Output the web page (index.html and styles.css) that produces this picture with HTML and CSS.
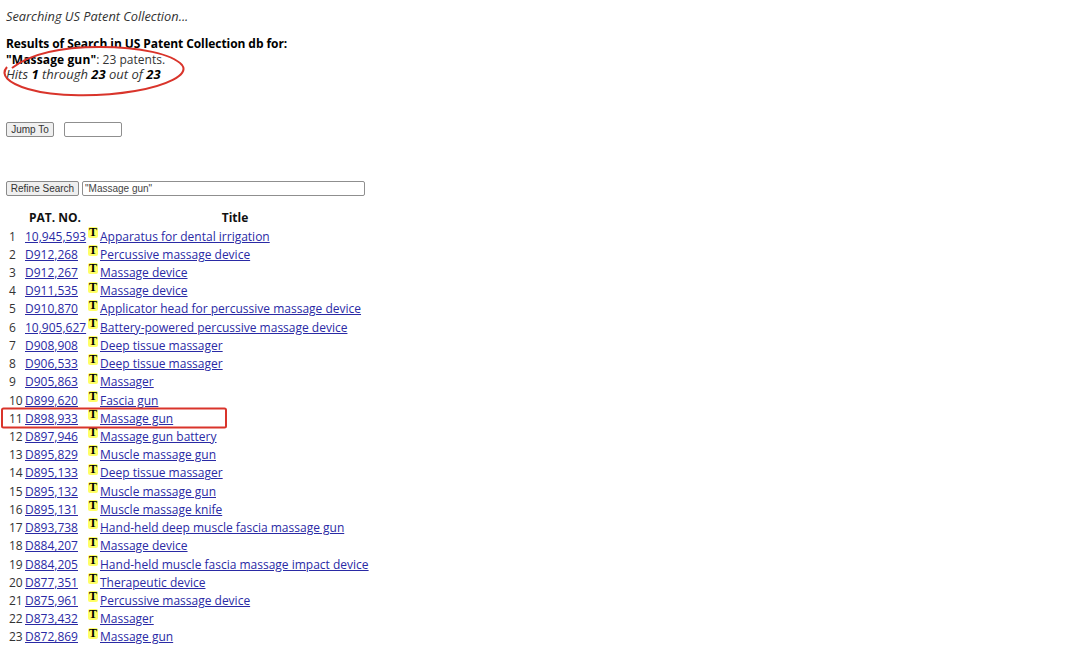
FILE: index.html
```html
<!DOCTYPE html>
<html lang="en">
<head>
<meta charset="utf-8">
<title>Searching US Patent Collection</title>
<link rel="stylesheet" href="styles.css">
</head>
<body>
<p class="searching">Searching US Patent Collection...</p>
<div class="summary">
  <div class="summary-title">Results of Search in US Patent Collection db for:</div>
  <div class="count"><b>"Massage gun"</b>: 23 patents.</div>
  <div class="hits">Hits <b>1</b> through <b>23</b> out of <b>23</b></div>
</div>
<form class="jump"><button type="button" class="btn">Jump To</button><input class="jump-input" type="text"></form>
<form class="refine"><button type="button" class="btn">Refine Search</button><input class="refine-input" type="text" value="&quot;Massage gun&quot;"></form>
<table class="results">
  <colgroup><col class="c-num"><col class="c-no"><col class="c-t"><col class="c-title"></colgroup>
  <thead><tr><th></th><th>PAT. NO.</th><th></th><th>Title</th></tr></thead>
  <tbody>
    <tr><td>1</td><td><a href="#">10,945,593</a></td><td><span class="t">T</span></td><td><a href="#">Apparatus for dental irrigation</a></td></tr>
    <tr><td>2</td><td><a href="#">D912,268</a></td><td><span class="t">T</span></td><td><a href="#">Percussive massage device</a></td></tr>
    <tr><td>3</td><td><a href="#">D912,267</a></td><td><span class="t">T</span></td><td><a href="#">Massage device</a></td></tr>
    <tr><td>4</td><td><a href="#">D911,535</a></td><td><span class="t">T</span></td><td><a href="#">Massage device</a></td></tr>
    <tr><td>5</td><td><a href="#">D910,870</a></td><td><span class="t">T</span></td><td><a href="#">Applicator head for percussive massage device</a></td></tr>
    <tr><td>6</td><td><a href="#">10,905,627</a></td><td><span class="t">T</span></td><td><a href="#">Battery-powered percussive massage device</a></td></tr>
    <tr><td>7</td><td><a href="#">D908,908</a></td><td><span class="t">T</span></td><td><a href="#">Deep tissue massager</a></td></tr>
    <tr><td>8</td><td><a href="#">D906,533</a></td><td><span class="t">T</span></td><td><a href="#">Deep tissue massager</a></td></tr>
    <tr><td>9</td><td><a href="#">D905,863</a></td><td><span class="t">T</span></td><td><a href="#">Massager</a></td></tr>
    <tr><td>10</td><td><a href="#">D899,620</a></td><td><span class="t">T</span></td><td><a href="#">Fascia gun</a></td></tr>
    <tr><td>11</td><td><a href="#">D898,933</a></td><td><span class="t">T</span></td><td><a href="#">Massage gun</a></td></tr>
    <tr><td>12</td><td><a href="#">D897,946</a></td><td><span class="t">T</span></td><td><a href="#">Massage gun battery</a></td></tr>
    <tr><td>13</td><td><a href="#">D895,829</a></td><td><span class="t">T</span></td><td><a href="#">Muscle massage gun</a></td></tr>
    <tr><td>14</td><td><a href="#">D895,133</a></td><td><span class="t">T</span></td><td><a href="#">Deep tissue massager</a></td></tr>
    <tr><td>15</td><td><a href="#">D895,132</a></td><td><span class="t">T</span></td><td><a href="#">Muscle massage gun</a></td></tr>
    <tr><td>16</td><td><a href="#">D895,131</a></td><td><span class="t">T</span></td><td><a href="#">Muscle massage knife</a></td></tr>
    <tr><td>17</td><td><a href="#">D893,738</a></td><td><span class="t">T</span></td><td><a href="#">Hand-held deep muscle fascia massage gun</a></td></tr>
    <tr><td>18</td><td><a href="#">D884,207</a></td><td><span class="t">T</span></td><td><a href="#">Massage device</a></td></tr>
    <tr><td>19</td><td><a href="#">D884,205</a></td><td><span class="t">T</span></td><td><a href="#">Hand-held muscle fascia massage impact device</a></td></tr>
    <tr><td>20</td><td><a href="#">D877,351</a></td><td><span class="t">T</span></td><td><a href="#">Therapeutic device</a></td></tr>
    <tr><td>21</td><td><a href="#">D875,961</a></td><td><span class="t">T</span></td><td><a href="#">Percussive massage device</a></td></tr>
    <tr><td>22</td><td><a href="#">D873,432</a></td><td><span class="t">T</span></td><td><a href="#">Massager</a></td></tr>
    <tr><td>23</td><td><a href="#">D872,869</a></td><td><span class="t">T</span></td><td><a href="#">Massage gun</a></td></tr>
  </tbody>
</table>
<svg class="marks" width="1080" height="651" viewBox="0 0 1080 651" aria-hidden="true">
  <path class="mark" d="M12 68 C30 54 62 47 100 47 C140 47 172 54 182 65 C190 75 165 86 135 91 C100 97 55 97 28 89 C8 83 0 75 7 67"/>
  <rect class="mark" x="2" y="408.500" width="224" height="19" rx="1.500"/>
</svg>
</body>
</html>
```

FILE: styles.css
```css
html, body { margin: 0; padding: 0; background: #fff; }
body {
  position: relative;
  width: 1080px;
  height: 651px;
  overflow: hidden;
  font-family: "Open Sans", "Noto Sans", "Liberation Sans", sans-serif;
  font-size: 12px;
  line-height: 15.5px;
  color: #333;
}
.searching { margin: 0; padding: 9px 0 0 6px; font-style: italic; font-size: 12.8px; }
.summary { padding: 11px 0 0 6px; }
.summary-title, .summary b { font-weight: 700; color: #000; }
.summary-title { letter-spacing: -0.07px; }
.count { position: relative; top: 0.5px; letter-spacing: 0.03px; }
.count b { letter-spacing: 0.12px; }
.hits { font-style: italic; font-size: 13px; position: relative; top: 0.5px; }
.jump { display: flex; align-items: center; gap: 10px; padding: 39.500px 0 0 6px; }
.refine { display: flex; align-items: center; gap: 3px; padding: 44px 0 0 6px; }
.btn {
  width: 48px;
  height: 15px;
  padding: 0;
  border: 1px solid #8a8a8a;
  border-radius: 2px;
  background: #efefef;
  color: #333;
  font: 10px/13px "Liberation Sans", sans-serif;
  box-sizing: border-box;
}
.refine .btn { width: 73px; }
.jump-input, .refine-input {
  height: 15px;
  box-sizing: border-box;
  border: 1px solid #8f8f8f;
  border-radius: 2px;
  background: #fff;
  color: #444;
  padding: 0 2px;
  font: 10px/13px "Liberation Sans", sans-serif;
}
.jump-input { width: 58px; }
.refine-input { width: 283px; }
.results { border-collapse: collapse; table-layout: fixed; width: 364px; margin: 12.750px 0 0 6px; }
.c-num { width: 19px; }
.c-no { width: 60px; }
.c-t { width: 15px; }
.c-title { width: 270px; }
.results th { padding: 0; height: 19px; font-weight: 700; color: #111; text-align: center; }
.results td { padding: 0; height: 18.230px; white-space: nowrap; vertical-align: middle; }
.results td:first-child { padding-left: 3px; }
.results td:nth-child(3) { padding-left: 3px; }
.results a { color: #2a2aa5; text-decoration: underline; }
.t {
  display: block;
  width: 10px;
  height: 11px;
  margin-top: -8px;
  background: #ffff66;
  border-radius: 2px;
  color: #000;
  font: 700 12px/10px "Liberation Serif", serif;
  text-align: center;
}
.marks { position: absolute; left: 0; top: 0; pointer-events: none; }
.mark { fill: none; stroke: #d9342b; stroke-width: 2; }
```
